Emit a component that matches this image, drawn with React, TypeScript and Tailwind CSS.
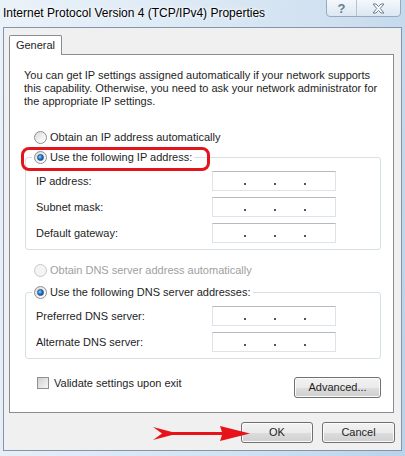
import React from "react";

const FONT = "font-['Liberation_Sans',Arial,sans-serif]";

function Radio({ checked = false, disabled = false }: { checked?: boolean; disabled?: boolean }) {
  return (
    <span
      className={
        "flex h-[13px] w-[13px] shrink-0 items-center justify-center rounded-full border " +
        (disabled
          ? "border-[#c9c9c9] bg-[#f4f4f4]"
          : "border-[#8e8f8f] bg-[linear-gradient(135deg,#d6d6d6_0%,#f4f4f4_60%,#ffffff_100%)]")
      }
    >
      {checked && (
        <span className="h-[7px] w-[7px] rounded-full border border-[#1b4f85] bg-[radial-gradient(circle_at_35%_35%,#8fd0ff_0%,#2a7fd0_45%,#0b3e78_100%)]" />
      )}
    </span>
  );
}

function IpBox() {
  return (
    <div className="flex h-[20px] w-[124px] items-end gap-[28px] border border-[#dfe3e8] border-t-[#b5b9c0] bg-white pb-[5px] pl-[31px]">
      <span className="h-[2px] w-[2px] bg-[#555]" />
      <span className="h-[2px] w-[2px] bg-[#555]" />
      <span className="h-[2px] w-[2px] bg-[#555]" />
    </div>
  );
}

function Row({ label, first = false }: { label: string; first?: boolean }) {
  return (
    <div className={"flex items-center " + (first ? "mt-[7px]" : "mt-[6px]")}>
      <span className="ml-[10px] w-[176px] text-[11px] leading-[14px] text-[#1e1e1e]">{label}</span>
      <IpBox />
    </div>
  );
}

function Button({ label, w }: { label: string; w: string }) {
  return (
    <div
      className={
        "flex h-[21px] items-center justify-center rounded-[3px] border border-[#707070] text-[11px] text-[#1e1e1e] shadow-[inset_0_0_0_1px_#fbfbfb] bg-[linear-gradient(to_bottom,#f2f2f2_0%,#ebebeb_50%,#dddddd_50%,#cfcfcf_100%)] " +
        w
      }
    >
      {label}
    </div>
  );
}

function Group({ legend, rows }: { legend: string; rows: string[] }) {
  return (
    <fieldset className="ml-[15px] w-[356px] rounded-[3px] border border-[#d5dfe5] pb-[6px]">
      <legend className="ml-[6px] flex h-[14px] items-center gap-[3px] px-[2px]">
        <Radio checked />
        <span className="text-[11px] leading-[14px] text-[#1e1e1e]">{legend}</span>
      </legend>
      {rows.map((r, i) => (
        <Row key={r} label={r} first={i === 0} />
      ))}
    </fieldset>
  );
}

export default function App() {
  return (
    <div
      className={
        "relative h-[456px] w-[405px] overflow-hidden bg-[linear-gradient(100deg,#eaf2f9_0%,#dce9f5_40%,#cfe0f0_70%,#b9d3ea_100%)] " +
        FONT
      }
    >
      {/* title bar */}
      <div className="flex h-[27px] items-start">
        <span className="ml-[3px] mt-[6px] text-[12px] leading-[14px] text-black [text-shadow:0_0_6px_#ffffff,0_0_3px_#ffffff]">
          Internet Protocol Version 4 (TCP/IPv4) Properties
        </span>
        <div className="ml-auto mr-[4px] mt-[-1px] flex h-[18px] rounded-b-[4px] border border-[#98a9bd] bg-[linear-gradient(to_bottom,#f4f8fc,#dbe7f2)]">
          <div className="flex w-[30px] items-center justify-center border-r border-[#b4c2d2] text-[13px] font-bold leading-none text-[#6d7c8c]">
            ?
          </div>
          <div className="flex w-[43px] items-center justify-center">
            <svg width="13" height="11" viewBox="0 0 13 11">
              <path
                d="M1 1 H4 L6.5 3.6 L9 1 H12 L8.2 5.5 L12 10 H9 L6.5 7.4 L4 10 H1 L4.8 5.5 Z"
                fill="#ffffff"
                stroke="#6d7c8c"
                strokeWidth="1"
                strokeLinejoin="round"
              />
            </svg>
          </div>
        </div>
      </div>

      {/* client area */}
      <div className="ml-[3px] flex h-[424px] w-[399px] flex-col border border-[#8594a6] bg-[#f0f0f0]">
        <div className="relative z-10 mb-[-1px] ml-[5px] mt-[7px] flex h-[20px] w-[53px] items-center justify-center rounded-t-[2px] border border-b-0 border-[#898c95] bg-white text-[11px] text-[#1e1e1e]">
          General
        </div>
        <div className="ml-[5px] flex h-[359px] w-[385px] flex-col border border-[#898c95] bg-white">
          <p className="ml-[14px] mt-[14px] w-[360px] text-[11px] leading-[13px] text-[#1e1e1e]">
            You can get IP settings assigned automatically if your network supports
            this capability. Otherwise, you need to ask your network administrator
            for the appropriate IP settings.
          </p>

          <div className="ml-[24px] mt-[22px] flex h-[14px] items-center gap-[3px]">
            <Radio />
            <span className="text-[11px] leading-[14px] text-[#1e1e1e]">Obtain an IP address automatically</span>
          </div>

          <div className="mt-[6px]">
            <Group legend="Use the following IP address:" rows={["IP address:", "Subnet mask:", "Default gateway:"]} />
          </div>

          <div className="ml-[24px] mt-[13px] flex h-[14px] items-center gap-[3px]">
            <Radio disabled />
            <span className="text-[11px] leading-[14px] text-[#a0a0a0]">Obtain DNS server address automatically</span>
          </div>

          <div className="mt-[8px]">
            <Group legend="Use the following DNS server addresses:" rows={["Preferred DNS server:", "Alternate DNS server:"]} />
          </div>

          <div className="mt-[18px] flex items-start">
            <div className="ml-[27px] flex items-center gap-[5px]">
              <span className="h-[12px] w-[12px] border border-[#8e8f8f] bg-[linear-gradient(135deg,#d0d0d0,#f6f6f6)]" />
              <span className="text-[11px] leading-[12px] text-[#1e1e1e]">Validate settings upon exit</span>
            </div>
            <div className="ml-auto mr-[12px]">
              <Button label="Advanced..." w="w-[87px]" />
            </div>
          </div>
        </div>

        <div className="mr-[6px] mt-[9px] flex justify-end gap-[9px]">
          <Button label="OK" w="w-[72px]" />
          <Button label="Cancel" w="w-[73px]" />
        </div>
      </div>

      {/* red highlight around the chosen option */}
      <div className="absolute left-[21px] top-[147px] h-[24px] w-[189px] rounded-[8px] border-[3px] border-[#e3141b]" />

      {/* red arrow pointing to OK */}
      <svg className="absolute left-[150px] top-[425px]" width="104" height="18" viewBox="0 0 104 18">
        <path d="M3 2 L22 7 L72 7 L70 1 L100 8.5 L70 16 L72 10 L22 10 L3 15 L12 8.5 Z" fill="#e8121b" />
      </svg>
    </div>
  );
}
